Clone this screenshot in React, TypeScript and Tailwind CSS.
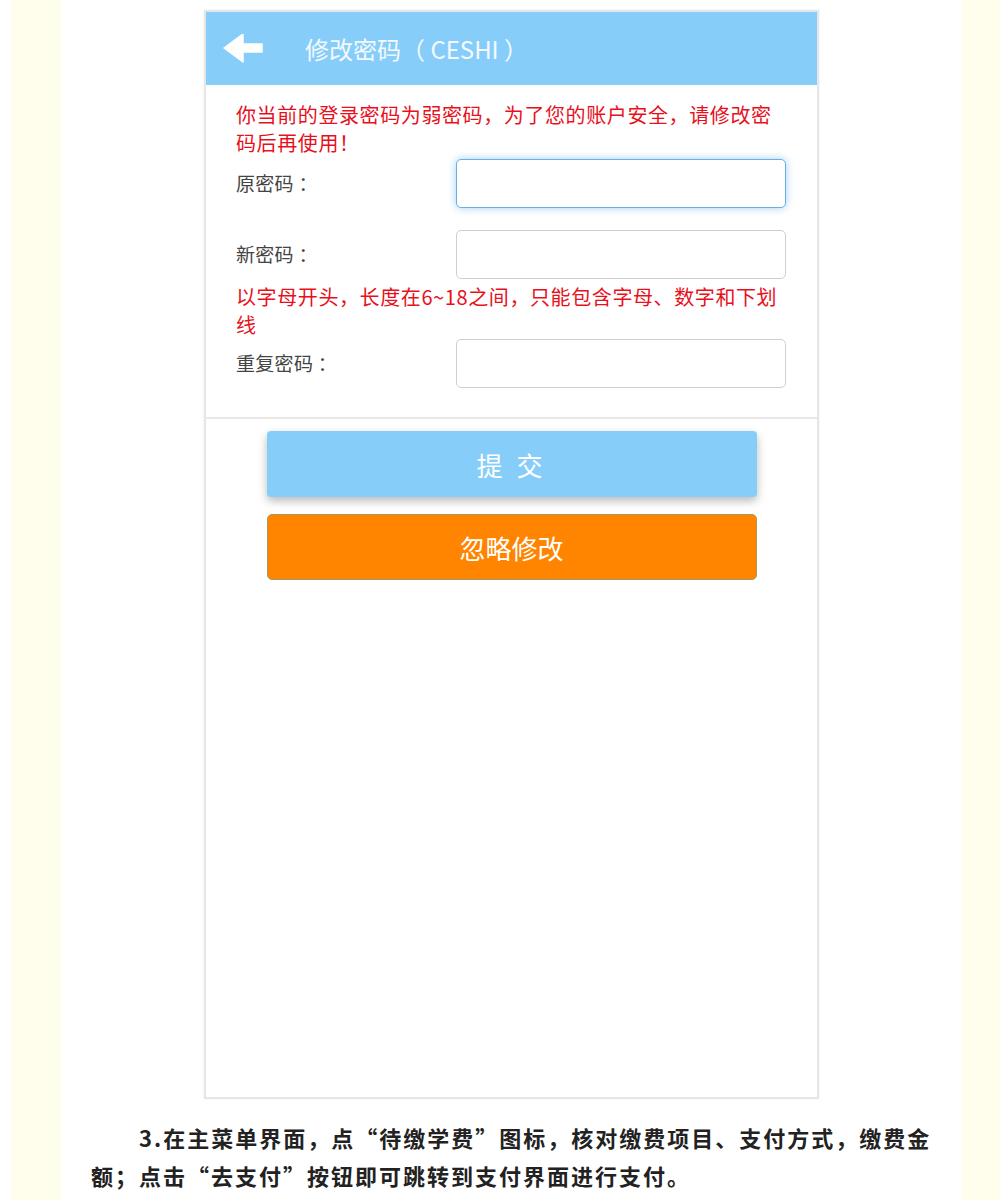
import React from "react";

const cjk = { fontFamily: '"Noto Sans CJK SC", "Noto Sans", sans-serif' };

function BackArrow() {
  return (
    <svg width="40" height="30" viewBox="0 0 40 30" className="block">
      <polygon points="1,14 20,0 20,10 39,10 39,18 20,18 20,28" fill="#ffffff" strokeLinejoin="round" stroke="#ffffff" strokeWidth="1.5" />
    </svg>
  );
}

function Field({ label, focused }: { label: string; focused?: boolean }) {
  return (
    <div className="flex items-center">
      <div className="w-[220px] text-[19px] text-[#444] tracking-[0.3px]">{label}</div>
      <div
        className={
          focused
            ? "h-[49px] w-[330px] rounded-[5px] border border-[#66afe9] bg-white shadow-[0_0_8px_rgba(102,175,233,0.6)]"
            : "h-[49px] w-[330px] rounded-[5px] border border-[#cfcfcf] bg-white"
        }
      />
    </div>
  );
}

export default function App() {
  return (
    <div className="flex h-[1200px] w-[1000px] bg-white" style={cjk}>
      <div className="w-[11px] shrink-0 bg-white" />
      <div className="w-[50px] shrink-0 bg-[#fffdec]" />
      <div className="flex w-[901px] shrink-0 flex-col items-center bg-white pt-[10px]">
        <div className="flex h-[1089px] w-[615px] flex-col border-2 border-[#e6e6e6] bg-white shadow-[0_0_2px_rgba(0,0,0,0.08)]">
          <div className="flex h-[73px] shrink-0 items-center bg-[#87cdf9] pl-[17px]">
            <BackArrow />
            <div className="ml-[42px] text-[24px] text-[#f4f9ff]">修改密码（ CESHI ）</div>
          </div>
          <div className="flex flex-col px-[30px] pt-[16px]">
            <div className="text-[20px] leading-[28px] tracking-[0.6px] text-[#e8101c]">
              你当前的登录密码为弱密码，为了您的账户安全，请修改密
              <br />
              码后再使用！
            </div>
            <div className="mt-[2px]">
              <Field label="原密码 ：" focused />
            </div>
            <div className="mt-[22px]">
              <Field label="新密码 ：" />
            </div>
            <div className="mt-[4px] text-[20px] leading-[28px] tracking-[0.6px] text-[#e8101c]">
              以字母开头，长度在6~18之间，只能包含字母、数字和下划
              <br />
              线
            </div>
            <div>
              <Field label="重复密码 ：" />
            </div>
          </div>
          <div className="mt-[29px] h-[2px] w-full bg-[#e8e8e8]" />
          <div className="flex flex-col items-center pt-[12px]">
            <div className="flex h-[66px] w-[490px] items-center justify-center rounded-[4px] bg-[#87cdf9] text-[26px] tracking-[4px] text-white shadow-[0_4px_10px_rgba(0,0,0,0.28)]">
              提 交
            </div>
            <div className="mt-[17px] flex h-[66px] w-[490px] items-center justify-center rounded-[5px] border border-[#a39a5c] bg-[#ff8400] text-[26px] text-white">
              忽略修改
            </div>
          </div>
        </div>
        <div className="mt-[19px] w-full px-[30px] text-[22px] font-bold leading-[38px] tracking-[2px] text-[#222]">
          <p className="indent-[48px]">
            3.在主菜单界面，点“待缴学费”图标，核对缴费项目、支付方式，缴费金额；点击“去支付”按钮即可跳转到支付界面进行支付。
          </p>
        </div>
      </div>
      <div className="w-[38px] shrink-0 bg-[#fffdec]" />
    </div>
  );
}
